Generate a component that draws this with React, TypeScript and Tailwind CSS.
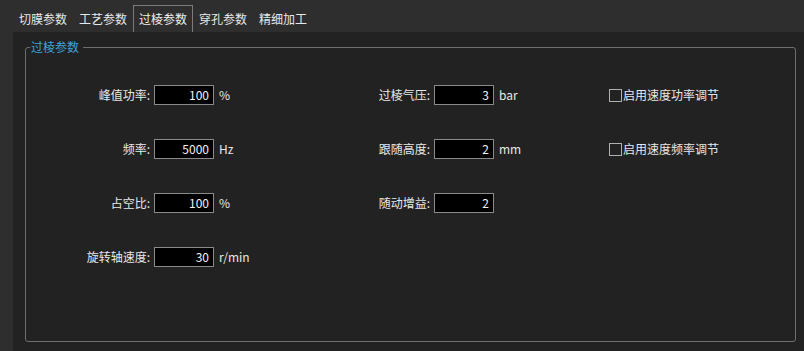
import React from "react";

const font = { fontFamily: '"Noto Sans CJK SC", "Noto Sans", sans-serif' };

function Field({ label, value, unit, labelW }: { label: string; value: string; unit?: string; labelW: string }) {
  return (
    <div className="flex items-center h-[20px]">
      <div className={`${labelW} text-right text-[12px] leading-[16px] text-[#e8e8e8]`}>{label}</div>
      <div className="ml-[4px] w-[60px] h-[20px] bg-black border border-[#8a8a8a] flex items-center justify-end pr-[4px] text-[12px] leading-[16px] text-[#f2f2f2]">
        {value}
      </div>
      {unit ? <div className="ml-[5px] text-[12px] leading-[16px] text-[#e8e8e8]">{unit}</div> : null}
    </div>
  );
}

function Check({ label }: { label: string }) {
  return (
    <div className="flex items-center h-[20px]">
      <div className="w-[13px] h-[13px] border border-[#b0b0b0]" />
      <div className="ml-[1px] text-[12px] leading-[16px] text-[#e8e8e8]">{label}</div>
    </div>
  );
}

export default function App() {
  const tabs = ["切膜参数", "工艺参数", "过棱参数", "穿孔参数", "精细加工"];
  return (
    <div className="w-[804px] h-[351px] bg-[#2e2e2e] flex flex-col overflow-hidden" style={font}>
      <div className="h-[32px] pl-[13px] flex items-end shrink-0">
        {tabs.map((t, i) =>
          i === 2 ? (
            <div key={t} className="w-[60px] h-[27px] border border-b-0 border-[#7c7c7c] flex items-center justify-center text-[12px] leading-[16px] text-[#f0f0f0]">
              {t}
            </div>
          ) : (
            <div key={t} className="w-[60px] h-[27px] flex items-center justify-center text-[12px] leading-[16px] text-[#e8e8e8]">
              {t}
            </div>
          )
        )}
      </div>
      <div className="flex-1 ml-[13px] bg-[#222222] pt-[15px] pl-[12px] pr-[8px] pb-[9px]">
        <div className="relative h-full border border-[#6e6e6e] rounded-[3px] pt-[37px]">
          <span className="absolute left-[4px] top-[-9px] pl-[1px] pr-[4px] bg-[#222222] text-[12px] leading-[16px] text-[#3fa3dc]">
            过棱参数
          </span>
          <div className="flex">
            <div className="w-[304px] flex flex-col gap-[34px]">
              <Field labelW="w-[124px]" label="峰值功率:" value="100" unit="%" />
              <Field labelW="w-[124px]" label="频率:" value="5000" unit="Hz" />
              <Field labelW="w-[124px]" label="占空比:" value="100" unit="%" />
              <Field labelW="w-[124px]" label="旋转轴速度:" value="30" unit="r/min" />
            </div>
            <div className="w-[279px] flex flex-col gap-[34px]">
              <Field labelW="w-[100px]" label="过棱气压:" value="3" unit="bar" />
              <Field labelW="w-[100px]" label="跟随高度:" value="2" unit="mm" />
              <Field labelW="w-[100px]" label="随动增益:" value="2" />
            </div>
            <div className="flex flex-col gap-[34px]">
              <Check label="启用速度功率调节" />
              <Check label="启用速度频率调节" />
            </div>
          </div>
        </div>
      </div>
    </div>
  );
}
